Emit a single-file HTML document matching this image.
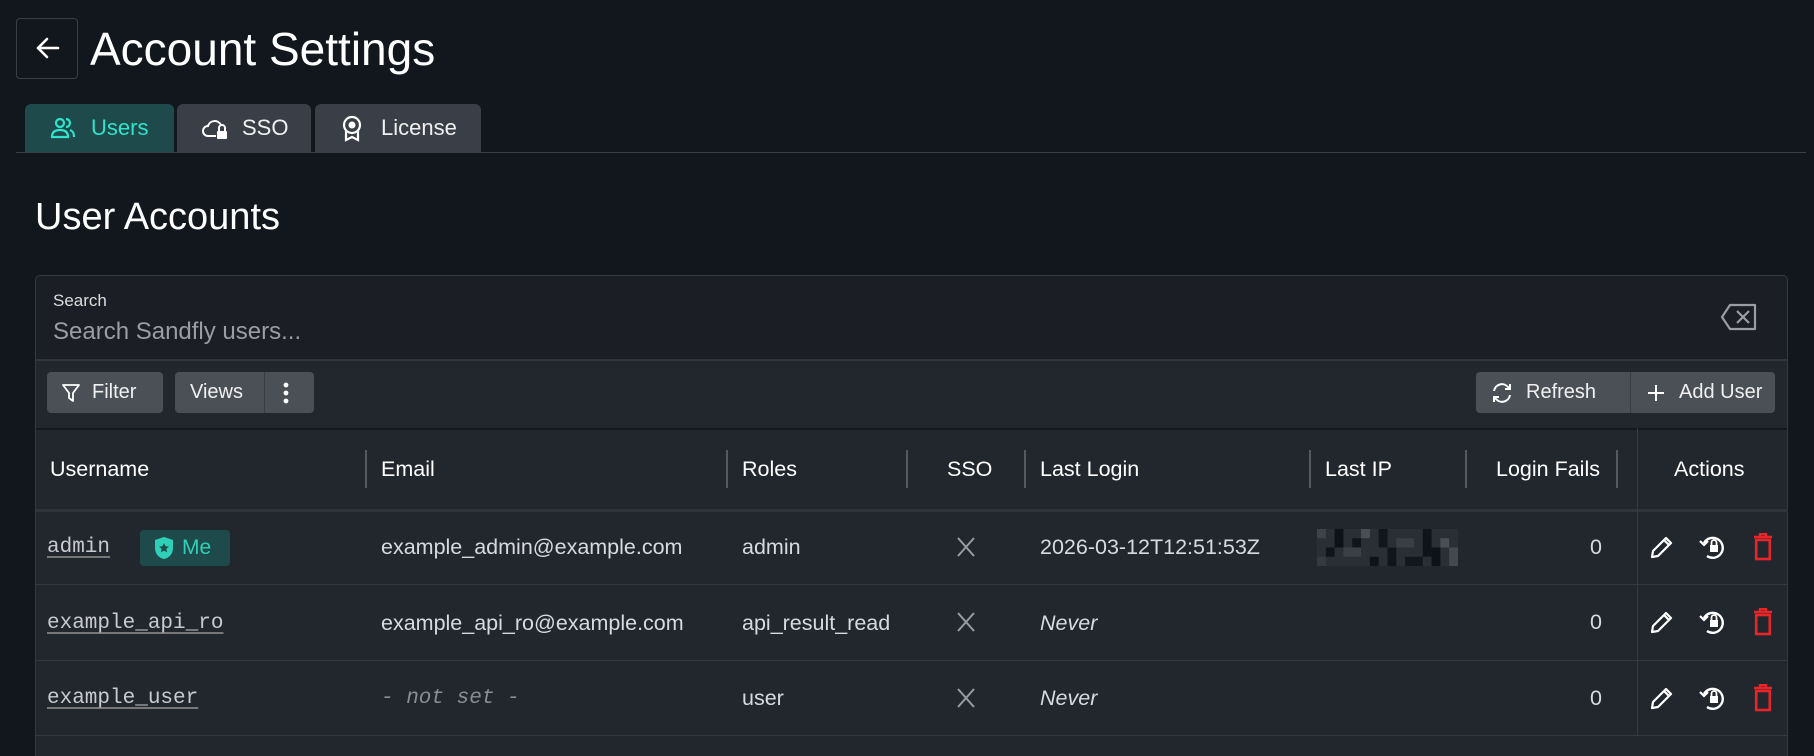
<!DOCTYPE html>
<html style="overflow:hidden;height:756px"><head><style>
*{box-sizing:border-box;margin:0;padding:0}
body{width:1814px;height:756px;background:#12171d;font-family:"Liberation Sans",sans-serif;color:#e8eaed;position:relative;overflow:hidden}
.a{position:absolute}
.back{left:16px;top:18px;width:62px;height:61px;border:1px solid #3a3f46;border-radius:4px;background:#12171d}
.title{left:90px;top:22px;font-size:46px;color:#fff}
.tab{top:104px;height:48px;border-radius:6px 6px 0 0;background:#3a3e46;display:flex;align-items:center;font-size:22px;color:#f0f0f0}
.line{left:16px;top:152px;width:1790px;height:1px;background:#3a3f46}
.h2{left:35px;top:196px;font-size:38px;color:#fff}
.panel{left:35px;top:275px;width:1753px;height:481px;border:1px solid #353a41;border-bottom:none;border-radius:5px 5px 0 0;background:#22272e;overflow:hidden}
.btn{top:372px;height:41px;background:#4b5057;border-radius:4px;display:flex;align-items:center;font-size:20px;color:#f0f0f0}
.hd{top:457px;font-size:21.5px;color:#fff}
.sep{top:450px;width:2px;height:38px;background:#555a61}
.rl{left:36px;width:1752px;height:1px;background:#353a41}
.c{font-size:21.5px;color:#d8dadd}
.mono{font-family:"Liberation Mono",monospace;color:#c8cacd;text-decoration:underline;text-decoration-color:#777;text-underline-offset:4px;font-size:21px}
</style></head><body>
<div class="a back"><svg width="60" height="59" viewBox="0 0 60 59"><path d="M21 29h20M30 20l-9 9 9 9" stroke="#fff" stroke-width="2.6" fill="none" stroke-linecap="round" stroke-linejoin="round"/></svg></div>
<div class="a title">Account Settings</div>
<div class="a tab" style="left:25px;width:149px;background:#1f4a4b;color:#2fe3cc"><svg style="margin:0 15px 0 25px" width="26" height="24" viewBox="0 0 26 24"><circle cx="10" cy="7" r="4" stroke="#2fe3cc" stroke-width="2.2" fill="none"/><path d="M2 21c0-5 3-7 8-7s8 2 8 7z" stroke="#2fe3cc" stroke-width="2.2" fill="none"/><path d="M16 3a4 4 0 010 8M20 14c3 1 4 3 4 7" stroke="#2fe3cc" stroke-width="2.2" fill="none"/></svg>Users</div>
<div class="a tab" style="left:177px;width:134px"><svg style="margin:0 13px 0 24px" width="28" height="26" viewBox="0 0 28 26"><path d="M15 21H7a5 5 0 010-10 7 7 0 0113-1" stroke="#fff" stroke-width="2" fill="none"/><rect x="16" y="16" width="10" height="8" rx="1" fill="#fff"/><path d="M18 16v-3a3 3 0 016 0v3" stroke="#fff" stroke-width="2" fill="none"/></svg>SSO</div>
<div class="a tab" style="left:315px;width:166px"><svg style="margin:0 18px 0 26px" width="22" height="28" viewBox="0 0 22 28"><circle cx="11" cy="11" r="8" stroke="#fff" stroke-width="2.2" fill="none"/><circle cx="11" cy="11" r="3.5" fill="#fff"/><path d="M5 17v9l6-3 6 3v-9" stroke="#fff" stroke-width="2.2" fill="none"/></svg>License</div>
<div class="a line"></div>
<div class="a h2">User Accounts</div>
<div class="a panel">
 <div class="a" style="left:0;top:0;width:100%;height:85px;background:#1b1f25;border-bottom:2px solid #30353c"></div>
 <div class="a" style="left:17px;top:15px;font-size:17px;color:#ddd">Search</div>
 <div class="a" style="left:17px;top:42px;font-size:24px;color:#9a9da1">Search Sandfly users...</div>
 <svg class="a" style="left:1684px;top:26px" width="38" height="30" viewBox="0 0 38 30"><path d="M10 3h25v24H10L2 15z" stroke="#9a9da1" stroke-width="2.2" fill="none" stroke-linejoin="round"/><path d="M17 9l12 12M29 9L17 21" stroke="#9a9da1" stroke-width="2.2"/></svg>
 <div class="a" style="left:0;top:152px;width:100%;height:2px;background:#15191e"></div>
</div>
<div class="a btn" style="left:47px;width:116px"><svg style="margin:0 12px 0 15px" width="18" height="20" viewBox="0 0 18 20"><path d="M1 2h16l-6 8v8l-4-3v-5z" stroke="#fff" stroke-width="1.8" fill="none" stroke-linejoin="round"/></svg>Filter</div>
<div class="a btn" style="left:175px;width:139px"><span style="padding-left:15px;width:90px;border-right:1px solid #3a3e44;line-height:41px">Views</span><svg style="margin-left:18px" width="6" height="22" viewBox="0 0 6 22"><circle cx="3" cy="3" r="2.4" fill="#fff"/><circle cx="3" cy="11" r="2.4" fill="#fff"/><circle cx="3" cy="19" r="2.4" fill="#fff"/></svg></div>
<div class="a btn" style="left:1476px;width:299px"><svg style="margin:0 12px 0 14px" width="24" height="24" viewBox="0 0 24 24"><path d="M4 10a8 8 0 0114-4l2 2M20 14a8 8 0 01-14 4l-2-2M20 3v5h-5M4 21v-5h5" stroke="#fff" stroke-width="2" fill="none"/></svg><span style="width:105px;border-right:1px solid #3a3e44;line-height:41px">Refresh</span><svg style="margin:0 14px 0 16px" width="18" height="18" viewBox="0 0 18 18"><path d="M9 1v16M1 9h16" stroke="#fff" stroke-width="2"/></svg>Add User</div>
<div class="a rl" style="top:509px;height:3px;background:#30353c"></div>
<div class="a rl" style="top:584px"></div>
<div class="a rl" style="top:660px"></div>
<div class="a rl" style="top:735px"></div>
<div class="a" style="left:1637px;top:428px;width:1px;height:307px;background:#353a41"></div>
<div class="a hd" style="left:50px">Username</div>
<div class="a sep" style="left:365px"></div>
<div class="a hd" style="left:381px">Email</div>
<div class="a sep" style="left:726px"></div>
<div class="a hd" style="left:742px">Roles</div>
<div class="a sep" style="left:906px"></div>
<div class="a hd" style="left:947px">SSO</div>
<div class="a sep" style="left:1024px"></div>
<div class="a hd" style="left:1040px">Last Login</div>
<div class="a sep" style="left:1309px"></div>
<div class="a hd" style="left:1325px">Last IP</div>
<div class="a sep" style="left:1465px"></div>
<div class="a hd" style="left:1496px">Login Fails</div>
<div class="a sep" style="left:1616px"></div>
<div class="a hd" style="left:1674px">Actions</div>

<div class="a mono" style="left:47px;top:536px">admin</div>
<div class="a" style="left:140px;top:530px;width:90px;height:36px;background:#1f4a4b;border-radius:4px;display:flex;align-items:center;color:#2fd0b8;font-size:21px"><svg style="margin:0 8px 0 14px" width="20" height="24" viewBox="0 0 20 24"><path d="M10 1l9 3v8c0 6-4 10-9 11C5 22 1 18 1 12V4z" fill="#2fd0b8"/><path d="M10 7l1.5 3.3 3.5.3-2.7 2.3.9 3.5L10 14.6l-3.2 1.8.9-3.5L5 10.6l3.5-.3z" fill="#1f4a4b"/></svg>Me</div>
<div class="a c" style="left:381px;top:535px">example_admin@example.com</div>
<div class="a c" style="left:742px;top:535px">admin</div>
<div class="a c" style="left:1040px;top:535px">2026-03-12T12:51:53Z</div>
<svg class="a" style="left:1317px;top:529px" width="141" height="37" viewBox="0 0 16 4" preserveAspectRatio="none">
<rect width="16" height="4" fill="#2a2f35"/>
<rect x="0" y="0" width="1" height="1" fill="#3e434a"/><rect x="2" y="0" width="1" height="2" fill="#0e1115"/><rect x="4" y="1" width="1" height="1" fill="#11141a"/><rect x="5" y="0" width="1" height="1" fill="#4a4f56"/><rect x="7" y="0" width="1" height="2" fill="#121519"/><rect x="9" y="1" width="2" height="1" fill="#3a3f46"/><rect x="12" y="0" width="1" height="3" fill="#101317"/><rect x="14" y="1" width="1" height="1" fill="#4a4f56"/>
<rect x="1" y="2" width="1" height="1" fill="#101317"/><rect x="3" y="2" width="2" height="1" fill="#3b4047"/><rect x="6" y="3" width="1" height="1" fill="#0f1216"/><rect x="8" y="2" width="1" height="2" fill="#111418"/><rect x="10" y="3" width="2" height="1" fill="#13161a"/><rect x="13" y="2" width="1" height="2" fill="#0e1115"/><rect x="15" y="2" width="1" height="2" fill="#444950"/><rect x="0" y="3" width="1" height="1" fill="#353a41"/>
</svg>
<div class="a mono" style="left:47px;top:612px">example_api_ro</div>
<div class="a c" style="left:381px;top:611px">example_api_ro@example.com</div>
<div class="a c" style="left:742px;top:611px">api_result_read</div>
<div class="a c" style="left:1040px;top:611px;font-style:italic">Never</div>
<div class="a mono" style="left:47px;top:687px">example_user</div>
<div class="a" style="left:381px;top:687px;font-family:'Liberation Mono',monospace;font-style:italic;color:#8a8d91;font-size:21px">- not set -</div>
<div class="a c" style="left:742px;top:686px">user</div>
<div class="a c" style="left:1040px;top:686px;font-style:italic">Never</div>

<div id="rows"></div>
<script>
var ys=[547,622,698],h='';
ys.forEach(function(y){
h+='<svg class="a" style="left:954px;top:'+(y-10)+'px" width="24" height="20" viewBox="0 0 24 20"><path d="M4 1l16 18M20 1L4 19" stroke="#9a9ca0" stroke-width="2"/></svg>';
h+='<div class="a c" style="left:1590px;top:'+(y-12)+'px">0</div>';
h+='<svg class="a" style="left:1649px;top:'+(y-13)+'px" width="26" height="26" viewBox="0 0 26 26"><path d="M3 23l1-6L17 4l5 5L9 22z M15 6l5 5" stroke="#fff" stroke-width="2.2" fill="none" stroke-linejoin="round"/></svg>';
h+='<svg class="a" style="left:1698px;top:'+(y-14)+'px" width="30" height="28" viewBox="0 0 30 28"><path d="M6 10a10 10 0 113 13" stroke="#fff" stroke-width="2.4" fill="none"/><path d="M2 8l4 4 4-4" stroke="#fff" stroke-width="2.2" fill="none"/><rect x="12" y="12" width="8" height="7" fill="#fff"/><path d="M13.5 12V9.5a2.5 2.5 0 015 0V12" stroke="#fff" stroke-width="1.8" fill="none"/></svg>';
h+='<svg class="a" style="left:1753px;top:'+(y-14)+'px" width="20" height="28" viewBox="0 0 20 28"><path d="M1 4h18M7 4V1h6v3" stroke="#e8262a" stroke-width="2.4" fill="none"/><rect x="3.2" y="7" width="13.6" height="19" stroke="#e8262a" stroke-width="2.6" fill="none"/></svg>';
});
document.getElementById('rows').innerHTML=h;
</script>
</body></html>
